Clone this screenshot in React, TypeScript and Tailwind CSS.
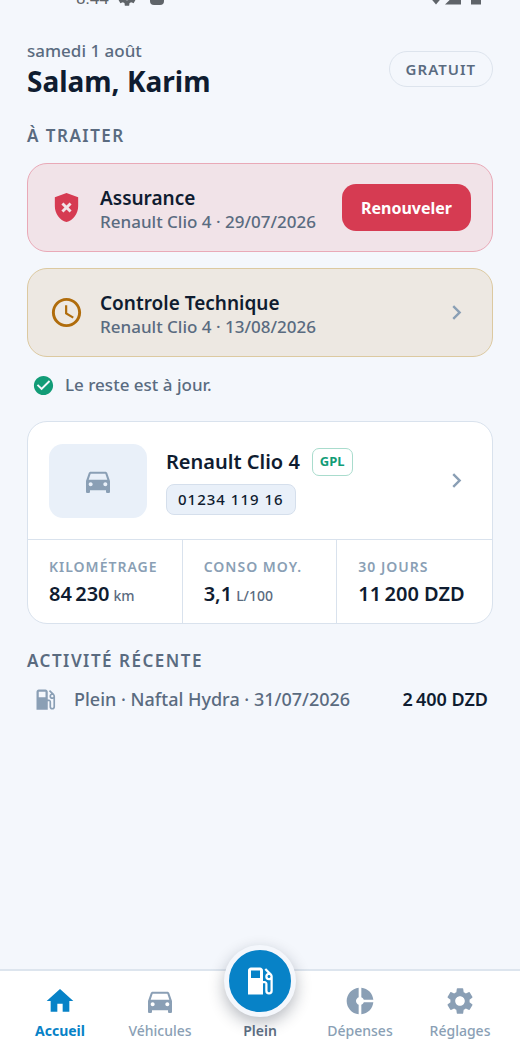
import React from "react";
import type { IconType } from "react-icons";
import {
    MdCheckCircle,
    MdChevronRight,
    MdDirectionsCar,
    MdDonutSmall,
    MdGppBad,
    MdHome,
    MdLocalGasStation,
    MdSchedule,
    MdSettings,
} from "react-icons/md";

type Tab = { label: string; icon: IconType; active?: boolean };

const leftTabs: Tab[] = [
    { label: "Accueil", icon: MdHome, active: true },
    { label: "Véhicules", icon: MdDirectionsCar },
];

const rightTabs: Tab[] = [
    { label: "Dépenses", icon: MdDonutSmall },
    { label: "Réglages", icon: MdSettings },
];

const stats = [
    { label: "KILOMÉTRAGE", value: "84\u2009230", unit: "km" },
    { label: "CONSO MOY.", value: "3,1", unit: "L/100" },
    { label: "30 JOURS", value: "11\u2009200 DZD", unit: "" },
];

// System bar, scrolled almost entirely off the top
function StatusBar() {
    return (
        <div className="h-[6px] overflow-hidden flex items-end justify-between pl-[76px] pr-9 text-[#5f6469]">
            <div className="flex items-end">
                <span className="font-[Roboto,sans-serif] text-[17px] leading-4">8:44</span>
                <MdSettings size={22} className="ml-[7px] -mb-[2px]" />
                <span className="ml-3 mb-px w-[14px] h-4 rounded-sm bg-[#5f6469]" />
            </div>
            <svg width="56" height="16" viewBox="0 0 56 16" fill="currentColor" aria-hidden="true">
                <path d="M0 5 Q8 -1 16 5 L8 14.5 Z" />
                <path d="M17 14.5 L33 -1 V14.5 Z" />
                <path d="M43 2 H46 V0 H50 V2 H53 V14.5 H43 Z" />
            </svg>
        </div>
    );
}

function SectionTitle({ children }: { children: React.ReactNode }) {
    return <h2 className="text-[17px] leading-6 font-semibold tracking-[1.5px] text-[#5a6b80]">{children}</h2>;
}

function TabButton({ label, icon: Icon, active }: Tab) {
    return (
        <button
            type="button"
            className={`flex flex-col items-center justify-end gap-1 text-sm leading-5 ${
                active ? "font-bold text-[#0782c7]" : "font-medium text-[#8a9fb5]"
            }`}
        >
            <Icon size={32} />
            {label}
        </button>
    );
}

export default function App() {
    return (
        <div className="min-h-screen flex flex-col bg-[#f4f7fc] font-['Noto_Sans',sans-serif] text-[#0f1c30]">
            <StatusBar />

            <main className="grow px-[27px] pt-[33px]">
                <header className="flex items-center justify-between">
                    <div>
                        <p className="text-[17px] leading-6 font-medium text-[#5a6b80]">samedi 1 août</p>
                        <h1 className="text-[28px] leading-9 font-bold">Salam, Karim</h1>
                    </div>
                    <span className="h-9 px-4 flex items-center rounded-full border border-[#dde4ed] text-[15px] font-semibold tracking-[1px] text-[#5a6b80]">
                        GRATUIT
                    </span>
                </header>

                <section className="mt-[25px]">
                    <SectionTitle>À TRAITER</SectionTitle>
                    <div className="mt-[15px] flex flex-col gap-4">
                        <article className="h-[89px] flex items-center rounded-[20px] border border-[#e9a9b7] bg-[#f1e3e8] px-[21px]">
                            <MdGppBad size={35} className="shrink-0 text-[#d63b52]" />
                            <div className="ml-4 pt-1 grow min-w-0">
                                <h3 className="text-[19px] leading-6 font-semibold">Assurance</h3>
                                <p className="text-[17px] leading-6 font-medium text-[#5a6b80] whitespace-nowrap">Renault Clio 4 · 29/07/2026</p>
                            </div>
                            <button type="button" className="shrink-0 h-[47px] px-[19px] rounded-[14px] bg-[#d63b52] text-base font-bold text-white">
                                Renouveler
                            </button>
                        </article>

                        <article className="h-[89px] flex items-center rounded-[20px] border border-[#dcc9a0] bg-[#ede8e2] px-[21px]">
                            <MdSchedule size={35} className="shrink-0 text-[#b06c0b]" />
                            <div className="ml-4 pt-1 grow min-w-0">
                                <h3 className="text-[19px] leading-6 font-semibold">Controle Technique</h3>
                                <p className="text-[17px] leading-6 font-medium text-[#5a6b80] whitespace-nowrap">Renault Clio 4 · 13/08/2026</p>
                            </div>
                            <MdChevronRight size={29} className="shrink-0 text-[#8a9fb5]" />
                        </article>
                    </div>

                    <p className="mt-4 ml-[5px] flex items-center gap-[10px] text-[17px] leading-6 font-medium text-[#5a6b80]">
                        <MdCheckCircle size={23} className="text-[#129c77]" />
                        Le reste est à jour.
                    </p>
                </section>

                <section className="mt-6 rounded-[20px] border border-[#d9e2ed] bg-white overflow-hidden">
                    <div className="h-[117px] px-[21px] flex items-center">
                        <div className="w-[98px] h-[74px] shrink-0 rounded-[14px] bg-[#e9f0f9] flex items-center justify-center text-[#8a9fb5]">
                            <MdDirectionsCar size={32} />
                        </div>
                        <div className="ml-[19px] pt-[2px] grow flex flex-col items-start gap-2">
                            <div className="flex items-center gap-3">
                                <h3 className="text-xl leading-7 font-semibold">Renault Clio 4</h3>
                                <span className="h-7 px-[7px] flex items-center rounded-[7px] border border-[#a9dccd] text-[13px] font-bold text-[#129c77]">
                                    GPL
                                </span>
                            </div>
                            <span className="h-[31px] px-[11px] flex items-center rounded-[8px] border border-[#d5dfec] bg-[#e9f0f9] text-[15px] font-medium tracking-[1px]">
                                01234 119 16
                            </span>
                        </div>
                        <MdChevronRight size={29} className="shrink-0 text-[#8a9fb5]" />
                    </div>
                    <dl className="grid grid-cols-3 divide-x divide-[#d9e2ed] border-t border-[#d9e2ed]">
                        {stats.map((s) => (
                            <div key={s.label} className="h-[83px] pl-[21px] pt-4 whitespace-nowrap">
                                <dt className="text-sm leading-[22px] font-semibold tracking-[1px] text-[#8a9fb5]">{s.label}</dt>
                                <dd className="mt-[2px] text-xl leading-7 font-semibold">
                                    {s.value}
                                    {s.unit && <span className="ml-1 text-sm font-medium text-[#5a6b80]">{s.unit}</span>}
                                </dd>
                            </div>
                        ))}
                    </dl>
                </section>

                <section className="mt-[25px]">
                    <SectionTitle>ACTIVITÉ RÉCENTE</SectionTitle>
                    <div className="mt-3 px-[5px] flex items-center">
                        <MdLocalGasStation size={27} className="shrink-0 text-[#8a9fb5]" />
                        <span className="ml-[15px] grow text-lg leading-7 font-medium text-[#5a6b80] whitespace-nowrap">
                            Plein · Naftal Hydra · 31/07/2026
                        </span>
                        <span className="text-lg leading-7 font-semibold whitespace-nowrap">{"2\u2009400 DZD"}</span>
                    </div>
                </section>
            </main>

            <nav className="h-[90px] px-[10px] pb-[18px] grid grid-cols-5 border-t-2 border-[#dde5ee] bg-white">
                {leftTabs.map((t) => (
                    <TabButton key={t.label} {...t} />
                ))}
                {/* Raised action button, sticks out above the bar */}
                <button type="button" className="-mt-7 flex flex-col items-center justify-end gap-1 text-sm leading-5 font-semibold text-[#5a6b80]">
                    <span className="size-[72px] shrink-0 flex items-center justify-center rounded-full border-[5px] border-[#f4f7fc] bg-[#0782c7] text-white shadow-[0_6px_16px_rgba(15,28,48,0.3)]">
                        <MdLocalGasStation size={36} />
                    </span>
                    Plein
                </button>
                {rightTabs.map((t) => (
                    <TabButton key={t.label} {...t} />
                ))}
            </nav>
        </div>
    );
}
